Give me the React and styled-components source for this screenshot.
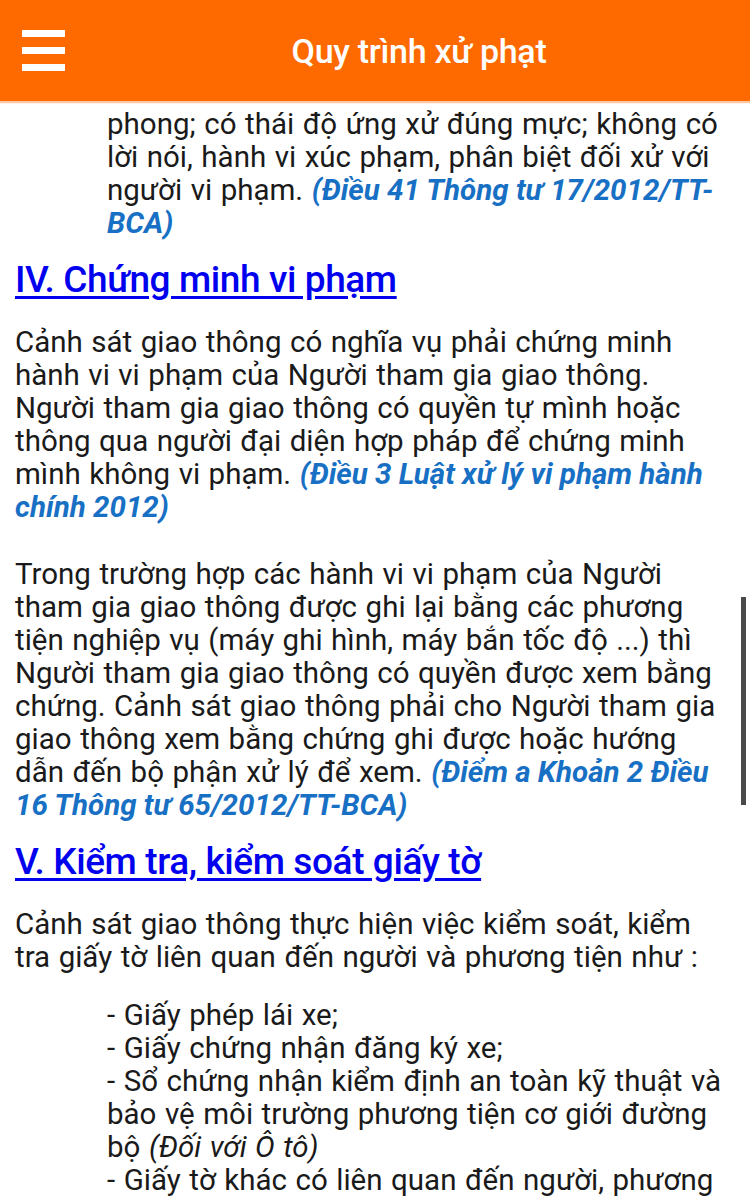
import React from "react";
import styled, { createGlobalStyle } from "styled-components";

const GlobalStyle = createGlobalStyle`
  html, body {
    margin: 0;
    padding: 0;
    background: #fff;
    font-family: Roboto, "Noto Sans", sans-serif;
  }
`;

const Page = styled.div`
  width: 750px;
  height: 1198px;
  overflow: hidden;
  position: relative;
  background: #fff;
`;

const Header = styled.header`
  height: 101px;
  background: #ff6a00;
  display: flex;
  align-items: center;
  box-shadow: 0 2px 1px rgba(255, 160, 100, 0.6);
`;

const MenuButton = styled.div`
  width: 88px;
  height: 101px;
  display: flex;
  flex-direction: column;
  justify-content: center;
  gap: 10px;
  padding-left: 22px;
  box-sizing: border-box;
`;

const Bar = styled.span`
  display: block;
  width: 43px;
  height: 7px;
  background: #fff;
`;

const Title = styled.h1`
  flex: 1;
  margin: 0;
  text-align: center;
  color: #fff;
  font-size: 34px;
  font-weight: 500;
  letter-spacing: -0.3px;
`;

const Content = styled.main`
  padding: 7px 4px 0 15px;
  color: #1a1a1a;
  font-size: 29.5px;
  line-height: 33px;
  word-spacing: 1.2px;
`;

const Para = styled.div`
  margin: 0 0 ${(p) => p.$gap ?? 34}px 0;
  padding-left: ${(p) => (p.$indent ? 92 : 0)}px;
`;

const Line = styled.div`
  white-space: nowrap;
`;

const Heading = styled.h2`
  margin: 0 0 28px 0;
  font-size: 37px;
  line-height: 36px;
  font-weight: 500;
  color: #0000ee;
  text-decoration: underline;
  text-underline-offset: 4px;
  letter-spacing: -0.4px;
  word-spacing: 0;
`;

const Cite = styled.span`
  color: #1870c4;
  font-style: italic;
  font-weight: 700;
  word-spacing: 0;
`;

const Em = styled.span`
  font-style: italic;
`;

const Scrollbar = styled.div`
  position: absolute;
  right: 4px;
  top: 597px;
  width: 5px;
  height: 208px;
  background: #4a4a4a;
`;

export default function App() {
  return (
    <Page>
      <GlobalStyle />
      <Header>
        <MenuButton>
          <Bar />
          <Bar />
          <Bar />
        </MenuButton>
        <Title>Quy trình xử phạt</Title>
      </Header>
      <Content>
        <Para $indent $gap={22}>
          <Line>phong; có thái độ ứng xử đúng mực; không có</Line>
          <Line>lời nói, hành vi xúc phạm, phân biệt đối xử với</Line>
          <Line>
            người vi phạm. <Cite>(Điều 41 Thông tư 17/2012/TT-</Cite>
          </Line>
          <Line>
            <Cite>BCA)</Cite>
          </Line>
        </Para>
        <Heading>IV. Chứng minh vi phạm</Heading>
        <Para>
          <Line>Cảnh sát giao thông có nghĩa vụ phải chứng minh</Line>
          <Line>hành vi vi phạm của Người tham gia giao thông.</Line>
          <Line>Người tham gia giao thông có quyền tự mình hoặc</Line>
          <Line>thông qua người đại diện hợp pháp để chứng minh</Line>
          <Line>
            mình không vi phạm. <Cite>(Điều 3 Luật xử lý vi phạm hành</Cite>
          </Line>
          <Line>
            <Cite>chính 2012)</Cite>
          </Line>
        </Para>
        <Para $gap={22}>
          <Line>Trong trường hợp các hành vi vi phạm của Người</Line>
          <Line>tham gia giao thông được ghi lại bằng các phương</Line>
          <Line>tiện nghiệp vụ (máy ghi hình, máy bắn tốc độ ...) thì</Line>
          <Line>Người tham gia giao thông có quyền được xem bằng</Line>
          <Line>chứng. Cảnh sát giao thông phải cho Người tham gia</Line>
          <Line>giao thông xem bằng chứng ghi được hoặc hướng</Line>
          <Line>
            dẫn đến bộ phận xử lý để xem. <Cite>(Điểm a Khoản 2 Điều</Cite>
          </Line>
          <Line>
            <Cite>16 Thông tư 65/2012/TT-BCA)</Cite>
          </Line>
        </Para>
        <Heading>V. Kiểm tra, kiểm soát giấy tờ</Heading>
        <Para $gap={25}>
          <Line>Cảnh sát giao thông thực hiện việc kiểm soát, kiểm</Line>
          <Line>tra giấy tờ liên quan đến người và phương tiện như :</Line>
        </Para>
        <Para $indent $gap={0}>
          <Line>- Giấy phép lái xe;</Line>
          <Line>- Giấy chứng nhận đăng ký xe;</Line>
          <Line>- Sổ chứng nhận kiểm định an toàn kỹ thuật và</Line>
          <Line>bảo vệ môi trường phương tiện cơ giới đường</Line>
          <Line>
            bộ <Em>(Đối với Ô tô)</Em>
          </Line>
          <Line>- Giấy tờ khác có liên quan đến người, phương</Line>
        </Para>
      </Content>
      <Scrollbar />
    </Page>
  );
}
